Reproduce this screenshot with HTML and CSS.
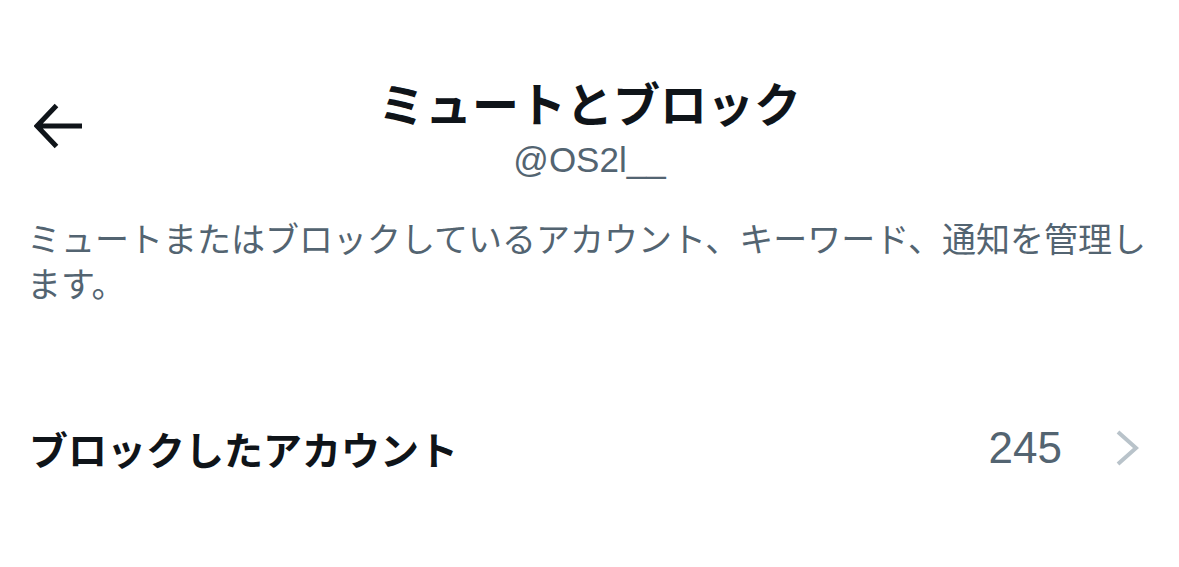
FILE: index.html
```html
<!DOCTYPE html>
<html lang="ja">
<head>
<meta charset="utf-8">
<title>ミュートとブロック</title>
<link rel="stylesheet" href="styles.css">
</head>
<body>
<div class="page">
  <header class="header">
    <div class="back">
      <svg width="50" height="46" viewBox="0 0 50 46" aria-hidden="true">
        <path d="M22.5 2.5 L3 23 L22.5 43.5 M3 23 L48 23" fill="none" stroke="#0f1419" stroke-width="5" stroke-linecap="butt" stroke-linejoin="miter"/>
      </svg>
    </div>
    <div class="titles">
      <h1 class="title">ミュートとブロック</h1>
      <div class="handle">@OS2l__</div>
    </div>
    <div class="spacer"></div>
  </header>
  <p class="desc">ミュートまたはブロックしているアカウント、キーワード、通知を管理します。</p>
  <div class="row">
    <span class="label">ブロックしたアカウント</span>
    <span class="count">245</span>
    <svg class="chev" width="24" height="36" viewBox="0 0 24 36" aria-hidden="true">
      <path d="M3 2 L21 18 L3 34" fill="none" stroke="#b9c3ca" stroke-width="4"/>
    </svg>
  </div>
  <div class="row row-next">
    <span class="label">ミュートしたアカウント</span>
  </div>
</div>
</body>
</html>
```
FILE: styles.css
```css
html, body {
  margin: 0;
  padding: 0;
  background: #ffffff;
}
body {
  width: 1179px;
  height: 567px;
  overflow: hidden;
  font-family: "Noto Sans CJK JP", "Noto Sans", sans-serif;
  color: #0f1419;
}
.page {
  display: flex;
  flex-direction: column;
}
.header {
  display: grid;
  grid-template-columns: 1fr auto 1fr;
  padding-top: 74px;
}
.back {
  padding-left: 34px;
  padding-top: 29px;
}
.back svg {
  display: block;
}
.titles {
  display: flex;
  flex-direction: column;
  align-items: center;
}
.title {
  margin: 0;
  font-size: 47px;
  line-height: 56px;
  font-weight: 700;
}
.handle {
  margin-top: 9px;
  font-family: "Liberation Sans", Arial, sans-serif;
  font-size: 35px;
  line-height: 42px;
  color: #536471;
}
.desc {
  margin: 34px 0 0 0;
  padding: 0 20px 0 27px;
  font-size: 34px;
  line-height: 45px;
  color: #536471;
}
.row {
  display: flex;
  align-items: center;
  margin-top: 114px;
  padding: 0 40px 0 29px;
  height: 58px;
}
.label {
  flex: 1;
  font-size: 39px;
  line-height: 58px;
  font-weight: 700;
}
.count {
  font-family: "Liberation Sans", Arial, sans-serif;
  font-size: 44px;
  color: #536471;
  margin-right: 53px;
}
.chev {
  display: block;
}
.row-next {
  margin-top: 82px;
}
```
